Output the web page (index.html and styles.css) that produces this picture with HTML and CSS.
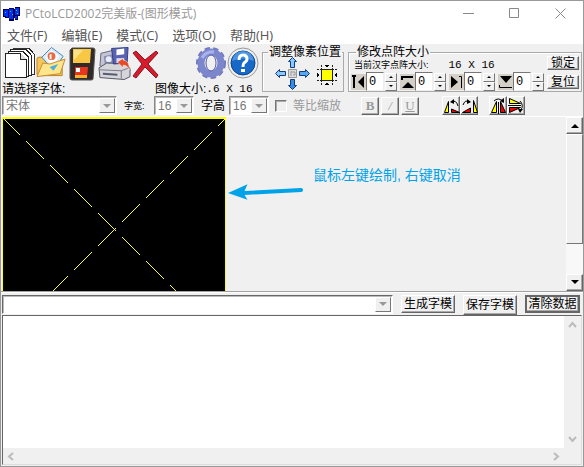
FILE: index.html
```html
<!DOCTYPE html>
<html lang="zh-CN">
<head>
<meta charset="utf-8">
<title>PCtoLCD2002</title>
<link rel="stylesheet" href="styles.css">
</head>
<body>
<div class="window">
  <header class="titlebar">
    <svg class="logo" width="17" height="14" viewBox="0 0 17 14" shape-rendering="crispEdges">
      <path fill="#000050" d="M0 2h6V1h5v1h1V0h5v9h-2v4h-3v-2h-1v3H6v-3H2v-1H0z"/>
      <path fill="#0030f0" d="M1 3h4v6H1zM6 2h4v10H6zM12 1h4v7h-4zM3 9h2v1H3zM12 9h2v3h-2z"/>
      <path fill="#20c8ff" d="M2 5h1v1H2zM7 4h1v1H7zM9 7h1v1H9zM13 3h1v1h-1zM14 6h1v1h-1z"/>
    </svg>
    <h1 class="title">PCtoLCD2002完美版-(图形模式)</h1>
    <button class="caption" aria-label="最小化"><svg width="11" height="11"><path d="M0 5.5h11"/></svg></button>
    <button class="caption" aria-label="最大化"><svg width="11" height="11"><path d="M.5.5h9v9h-9z"/></svg></button>
    <button class="caption" aria-label="关闭"><svg width="11" height="11"><path d="M.5.5l10 10M10.500.5l-10 10"/></svg></button>
  </header>
  <nav class="menubar">
    <a href="#">文件(F)</a><a href="#">编辑(E)</a><a href="#">模式(C)</a><a href="#">选项(O)</a><a href="#">帮助(H)</a>
  </nav>

  <section class="toolbar">
    <div class="left">
      <div class="tools">
        <button class="tool" aria-label="新建"><svg width="31" height="35" viewBox="0 0 31 35" shape-rendering="crispEdges">
          <path fill="#fff" stroke="#333" d="M8.500 2.500h15l6 6v20h-21z"/><path fill="#fff" stroke="#222" d="M5.500 3.500h15l6 6v20h-21z"/><path fill="#fff" stroke="#222" d="M3.500 5.500h14l6 6v19h-20z"/><path fill="#fff" stroke="#222" d="M.5 7.500h15l6 6v18H.5z"/><path fill="#ddd" stroke="#222" d="M15.500 7.500v6h6"/><path stroke="#222" d="M18 5l6 6M21 3l6 7M24 2l5 6"/>
        </svg></button>
        <button class="tool" aria-label="打开"><svg width="32" height="35" viewBox="0 0 33 35">
          <path fill="#f5c65a" stroke="#bd8125" d="M1 29V13q0-2 2-2h6l3 3h15v16H3z"/>
          <path fill="#d9eefa" stroke="#4386b7" d="M16 1l12 9-10 15L6 11z"/><path fill="#fff" d="M16 4l8 6-7 11-7-10z"/><circle cx="16" cy="10" r="4" fill="#e86b42"/><path d="M15 8v5" stroke="#fff" stroke-width="2"/>
          <path fill="#ffe58b" stroke="#c7892c" d="M1 31l6-14 7 1 16-5-5 15z"/><path fill="#4bb1dc" d="M14 21l9-3-5 7z"/>
        </svg></button>
        <button class="tool" aria-label="保存"><svg width="30" height="35" viewBox="1 0 30 35">
          <path fill="#302b28" stroke="#555" d="M5 2h21q2 0 2 2l-2 29q0 1-2 1H5q-2 0-2-2V4z"/><path fill="#f8c743" d="M6 3h18l-1 14H6z"/><path fill="#ffe287" d="M7 4h9L7 14z"/><path fill="#e83520" d="M8 21h13l-1 10H8z"/><path fill="#fff" d="M9 22h4v4H9z"/><path fill="#f6b12f" d="M8 29h12v3H8z"/>
        </svg></button>
        <button class="tool" aria-label="另存为"><svg width="33" height="35" viewBox="0 0 34 35">
          <path fill="#c5c5d3" stroke="#65657e" d="M3 7l16-4 5 17-15 3-7-3z"/><path fill="#8c91b8" d="M6 10l9-2 1 9-9 2z"/><circle cx="11" cy="13" r="3" fill="#e8edff"/>
          <path fill="#d6d6da" stroke="#545463" d="M1 22l8-5 21 1 3 5v8l-6 3-25-2z"/><path stroke="#777787" fill="none" d="M2 24l22 1 8-3M24 25v8"/><path fill="#555b70" d="M5 27l15 1v2L5 29z"/>
          <path fill="#5864b3" stroke="#343d80" d="M14 2l17-1-1 16-14 1z"/><path fill="#fff" d="M19 3l8-1v6l-8 1z"/><path fill="#d9def2" d="M19 12h8v5h-8z"/><path fill="#e64b24" stroke="#fff" stroke-width=".5" d="M20 16l6-4v2q7 1 6 10-2-5-6-5v3z"/>
        </svg></button>
        <button class="tool" aria-label="删除"><svg width="30" height="35" viewBox="0 0 30 35">
          <path fill="#d41c2c" stroke="#8e1422" d="M2 7l3-2 9 9L25 5l2 2-10 11 10 11-2 3-11-11L5 32l-3-2 9-12z"/>
        </svg></button>
        <button class="tool gear" aria-label="设置"><svg width="32" height="35" viewBox="0 0 32 35">
          <ellipse cx="16" cy="17" rx="13" ry="14" fill="none" stroke="#7277bb" stroke-width="4" stroke-dasharray="5 3.170"/><ellipse cx="16" cy="17" rx="10" ry="11" fill="none" stroke="#7c86cd" stroke-width="7"/><ellipse cx="16" cy="17" rx="5" ry="8" fill="#f0f0f0" stroke="#565ca5"/><path fill="none" stroke="#a9b2ec" stroke-width="3" d="M7 12q4-7 12-6"/>
        </svg></button>
        <button class="tool" aria-label="关于"><svg width="32" height="35" viewBox="0 0 32 35">
          <circle cx="16" cy="17" r="15" fill="#eee" stroke="#999"/><circle cx="16" cy="17" r="12" fill="#1768c7" stroke="#0a4595"/><path fill="#4d94df" d="M5 15q2-10 11-10 9 0 11 10-11-5-22 0z"/><path fill="none" stroke="#fff" stroke-width="3" d="M12 14q0-5 4-5t4 4q0 2-3 4-1 1-1 4"/><path fill="#fff" d="M14 23h4v3h-4z"/>
        </svg></button>
      </div>
      <div class="labels"><label class="pick" for="font">请选择字体:</label><span>图像大小:</span><span class="mono">.6 X 16</span></div>
    </div>

    <fieldset class="group move">
      <legend>调整像素位置</legend>
      <div class="pad">
        <button class="up" aria-label="上移"><svg width="11" height="11"><path fill="#8ac9ff" stroke="#123c7c" d="M5.500.5l4 4h-2v6h-4v-6h-2z"/></svg></button>
        <button class="lt" aria-label="左移"><svg width="11" height="11"><path fill="#8ac9ff" stroke="#123c7c" d="M.5 5.500l4-4v2h6v4h-6v2z"/></svg></button>
        <button class="mid" aria-label="居中"><svg width="11" height="11"><path fill="#ddd" stroke="#999" d="M1.500 1.500h8v8h-8zM4 3v5M4 4h4v3H6"/></svg></button>
        <button class="rt" aria-label="右移"><svg width="11" height="11"><path fill="#56a9f0" stroke="#123c7c" d="M10.500 5.500l-4-4v2h-6v4h6v2z"/></svg></button>
        <button class="dn" aria-label="下移"><svg width="11" height="11"><path fill="#358ce8" stroke="#123c7c" d="M5.500 10.500l4-4h-2v-6h-4v6h-2z"/></svg></button>
      </div>
      <button class="square" aria-label="适应"><svg width="20" height="20" shape-rendering="crispEdges"><path stroke="#222" fill="none" d="M4.500 0v20M15.500 0v20M0 4.500h20M0 15.500h20" stroke-dasharray="2 1"/><path fill="#ff0" stroke="#222" d="M4.500 4.500h11v11h-11z"/><path d="M8 0h4l-2 3zM8 20h4l-2-3zM0 8v4l3-2zM20 8v4l-3-2z"/></svg></button>
    </fieldset>

    <fieldset class="group matrix">
      <legend>修改点阵大小</legend>
      <div class="matrix-main">
        <div class="current"><span class="tiny">当前汉字点阵大小:</span><span class="mono">16 X 16</span></div>
        <div class="spins">
          <div class="spin"><svg width="15" height="16"><path fill="none" stroke="#000" stroke-width="2" d="M1 2h4M3 2v12"/><path d="M13 2v12L7 8z"/></svg><input aria-label="左" value="0"><span class="arrows"><button aria-label="左加"><i class="tri-up"></i></button><button aria-label="左减"><i class="tri-down"></i></button></span></div>
          <div class="spin"><svg width="15" height="16"><path fill="none" stroke="#000" stroke-width="2" d="M2 6V3h11"/><path d="M2 14h12L8 8z"/></svg><input aria-label="上" value="0"><span class="arrows"><button aria-label="上加"><i class="tri-up"></i></button><button aria-label="上减"><i class="tri-down"></i></button></span></div>
          <div class="spin"><svg width="15" height="16"><path d="M2 2v12l7-6z"/><path fill="none" stroke="#000" d="M10 2.500h2.500V14"/></svg><input aria-label="右" value="0"><span class="arrows"><button aria-label="右加"><i class="tri-up"></i></button><button aria-label="右减"><i class="tri-down"></i></button></span></div>
          <div class="spin"><svg width="15" height="16"><path d="M2 2h12L8 9z"/><path fill="none" stroke="#000" d="M1.500 11v2.500H14"/></svg><input aria-label="下" value="0"><span class="arrows"><button aria-label="下加"><i class="tri-up"></i></button><button aria-label="下减"><i class="tri-down"></i></button></span></div>
        </div>
      </div>
      <div class="lock"><button class="btn">锁定</button><button class="btn">复位</button></div>
    </fieldset>
  </section>

  <section class="format">
    <span class="combo font"><select id="font" disabled><option>宋体</option></select><span class="drop"><i class="tri-down"></i></span></span>
    <label class="tiny width-label" for="cw">字宽:</label>
    <span class="combo"><select id="cw" disabled><option>16</option></select><span class="drop"><i class="tri-down"></i></span></span>
    <label class="height-label" for="ch">字高</label>
    <span class="combo"><select id="ch" disabled><option>16</option></select><span class="drop"><i class="tri-down"></i></span></span>
    <label class="scale"><input type="checkbox" disabled>等比缩放</label>
    <div class="styles">
      <button class="btn style" disabled><b>B</b></button><button class="btn style" disabled><em>/</em></button><button class="btn style" disabled><u>U</u></button>
    </div>
    <div class="flips">
      <button class="btn flip" aria-label="左转"><svg width="17" height="17"><path fill="#ff0" stroke="#000" d="M1.500 15.500h4v-11z"/><path fill="#e00" stroke="#000" d="M8.500 12v3.500h8z"/><path fill="none" stroke="#000" d="M8 5q5-3 7 4"/><path d="M7 5l4-3v5z"/></svg></button>
      <button class="btn flip" aria-label="右转"><svg width="17" height="17"><path fill="#ff0" stroke="#000" d="M12.500 15.500h4l-4-12z"/><path fill="#e00" stroke="#000" d="M9.500 11v4.500h-8z"/><path fill="none" stroke="#000" d="M2 8q2-6 7-3"/><path d="M10 5L6 2v5z"/></svg></button>
      <button class="btn flip gap" aria-label="水平翻转"><svg width="17" height="17"><path fill="#ff0" stroke="#000" d="M1.500 15.500h5v-11z"/><path fill="#e00" stroke="#000" d="M10.500 4.500v11h5z"/><path fill="none" stroke="#000" d="M8.500 5v12M4 4q4-4 9 0"/><path d="M14 6V1l-4 3z"/></svg></button>
      <button class="btn flip" aria-label="垂直翻转"><svg width="17" height="17"><path fill="#ff0" stroke="#000" d="M1.500 1.500v5h11z"/><path fill="#e00" stroke="#000" d="M1.500 15.500v-5h11z"/><path fill="none" stroke="#000" d="M0 8.500h13M12 4q4 4 1 9"/><path d="M10 12h5l-3 4z"/></svg></button>
    </div>
  </section>

  <main class="canvas">
    <svg class="drawing" width="224" height="100%" shape-rendering="crispEdges">
      <g fill="none" stroke="#ffff40"><path pathLength="240" stroke-dasharray="18 6" d="M.5.5l240 240"/><path pathLength="226" stroke-dasharray="18 6" d="M-.5 225.500l226-226"/></g>
      <path fill="none" stroke="#ff0" d="M.5 400V.5h223V400M0 1.500h224"/>
    </svg>
    <svg class="pointer" width="76" height="20" viewBox="0 0 78 20"><path fill="#00a2e8" d="M0 11L20 2l-3 7 58-3q2 0 2 2t-2 2l-58 3 3 5z"/></svg>
    <p class="note">鼠标左键绘制, 右键取消</p>
    <div class="scroll">
      <button class="btn" aria-label="向上滚动"><i class="tri-up"></i></button><div class="thumb"></div><div class="track"></div><button class="btn" aria-label="向下滚动"><i class="tri-down"></i></button>
    </div>
  </main>

  <section class="commands">
    <span class="combo history"><select aria-label="历史"><option></option></select><span class="drop"><i class="tri-down"></i></span></span>
    <button class="btn">生成字模</button><button class="btn save">保存字模</button><button class="btn clear">清除数据</button>
  </section>

  <section class="output">
    <textarea aria-label="输出"></textarea>
    <div class="vbar"><svg width="9" height="8"><path d="M1 6l3.500-4L8 6"/></svg><svg width="9" height="8"><path d="M1 2l3.500 4L8 2"/></svg></div>
    <div class="hbar"><svg width="8" height="9"><path d="M6 1L2 4.500 6 8"/></svg><svg width="8" height="9"><path d="M2 1l4 3.500L2 8"/></svg></div>
  </section>
</div>
</body>
</html>
```
FILE: styles.css
```css
* { box-sizing: border-box; }
body { margin: 0; font: 12px/14px "Liberation Sans", "Noto Sans CJK SC", sans-serif; color: #000; }
button, input, select, textarea { font: inherit; margin: 0; padding: 0; border: 0; border-radius: 0; }
button { background: none; color: inherit; }
svg { display: block; }
p, h1 { margin: 0; }

.window { display: flex; flex-direction: column; height: 100vh; border: 1px solid #999; background: #f0f0f0; }
.titlebar { display: flex; align-items: center; height: 25px; padding-left: 2px; background: #fff; }
.title { flex: 1; margin-left: 5px; font: 12px/20px "Open Sans", "Noto Sans CJK SC", sans-serif; color: #999; white-space: nowrap; }
.caption { display: grid; place-items: center; width: 46px; height: 24px; }
.caption path { fill: none; stroke: #888; }
.menubar { display: flex; gap: 14px; height: 18px; padding-left: 6px; background: #fff; font: 13px/18px "Open Sans", "Noto Sans CJK SC", sans-serif; }
.menubar a { color: #555; text-decoration: none; }

.toolbar { display: flex; height: 51px; padding-right: 1px; border-left: 1px solid #fff; }
.left { width: 260px; }
.tools { display: flex; height: 37px; padding: 1px 0 0 3px; }
.tool { flex: none; height: 36px; }
.gear { margin-left: 34px; }
.labels { display: flex; height: 14px; line-height: 16px; }
.pick { width: 153px; }
.mono { font-family: "Liberation Mono", monospace; font-size: 11px; }
.tiny { font-size: 9px; }

.group { position: relative; min-width: 0; height: 46px; margin: 2px 0 0; padding: 0; border: 1px solid #aaa; box-shadow: inset 1px 1px #fff; }
.group legend { padding: 0 1px; margin-left: 5px; line-height: 13px; white-space: nowrap; }
.move { display: flex; width: 82px; gap: 6px; }
.pad { display: grid; grid-template: repeat(3, 11px) / repeat(3, 12px); margin: -2px 0 0 12px; }
.up { grid-area: 1 / 2; } .lt { grid-area: 2 / 1; } .mid { grid-area: 2 / 2; } .rt { grid-area: 2 / 3; } .dn { grid-area: 3 / 2; }
.square { align-self: center; }
.matrix { display: flex; flex: 1; margin-left: 4px; padding-left: 2px; }
.matrix-main { flex: 1; }
.current { display: flex; gap: 20px; height: 13px; padding-left: 3px; line-height: 12px; white-space: nowrap; }
.spins { display: flex; gap: 2px; }
.spin { display: flex; align-items: center; width: 47px; height: 19px; }
.spin svg { flex: none; background: #d4d0c8; }
.spin input { width: 18px; height: 19px; padding-left: 2px; border: 1px solid; border-color: #777 #eee #eee #777; background: #fff; font-family: "Liberation Mono", monospace; }
.arrows { display: flex; flex-direction: column; margin-left: 1px; }
.arrows button { display: grid; place-items: center; width: 12px; height: 9px; border: 1px solid; border-color: #fff #777 #777 #fff; }
.arrows i { border-width: 2px; }
.lock { display: flex; flex-direction: column; gap: 5px; width: 34px; margin-top: -3px; }

.btn { display: grid; place-items: center; height: 14px; line-height: 12px; border: 1px solid; border-color: #fff #666 #666 #fff; box-shadow: inset -1px -1px #aaa; background: #f0f0f0; }
.lock .btn { width: 32px; }
.tri-up, .tri-down { width: 0; height: 0; border: 4px solid transparent; }
.tri-up { border-top-width: 0; border-bottom-color: #000; }
.tri-down { border-bottom-width: 0; border-top-color: #000; }
.arrows .tri-up { border-top-width: 0; }
.arrows .tri-down { border-bottom-width: 0; }

.format { display: flex; align-items: center; height: 22px; padding: 0 1px; border-bottom: 1px solid #fff; }
.combo { display: grid; grid-template-columns: 1fr 18px; width: 40px; height: 19px; border: 1px solid; border-color: #888 #fff #fff #888; box-shadow: inset 1px 1px #bbb; background: #fff; }
.combo select { grid-area: 1 / 1 / 2 / 3; appearance: none; padding-left: 3px; background: none; color: #777; opacity: 1; }
.drop { grid-area: 1 / 2; display: grid; place-items: center; margin: 1px; border: 1px solid; border-color: #fff #777 #777 #fff; background: #f0f0f0; pointer-events: none; }
.drop i { border-top-color: #999; }
.font { width: 115px; }
.width-label { margin-left: 7px; width: 30px; line-height: 12px; }
.height-label { width: 35px; padding-left: 7px; }
.scale { display: flex; align-items: center; gap: 6px; width: 86px; margin-left: 6px; color: #999; }
.scale input { appearance: none; width: 12px; height: 12px; border: 1px solid; border-color: #777 #fff #fff #777; box-shadow: inset 1px 1px #aaa; }
.styles { display: flex; gap: 2px; }
.style { width: 18px; height: 18px; color: #999; font: 13px/14px "Liberation Serif", serif; }
.flips { display: flex; margin-left: 23px; }
.flip { width: 18px; height: 19px; }
.gap { margin-left: 11px; }

.canvas { display: flex; flex: 176 1 0; min-height: 0; padding-left: 1px; border-bottom: 1px solid #a0a0a0; overflow: hidden; }
.drawing { flex: none; background: #000; }
.pointer { flex: none; margin: 65px 0 0 2px; }
.note { flex: 1; margin: 49px 0 0 9px; color: #00a2e8; font-size: 14px; line-height: 18px; white-space: nowrap; }
.scroll { display: flex; flex-direction: column; width: 17px; background: #f8f8f8; }
.scroll .btn { flex: none; height: 17px; }
.thumb { flex: 110; border: 1px solid; border-color: #fff #777 #777 #fff; background: #f0f0f0; }
.track { flex: 31; }

.commands { display: flex; align-items: flex-start; gap: 8px; height: 23px; padding: 2px 3px 0 1px; border-top: 1px solid #fff; }
.commands .btn { width: 54px; height: 18px; }
.history { flex: 1; border-color: #666 #fff #fff #666; }
.commands .save { height: 20px; }
.commands .clear { border: 2px solid #666; width: 55px; }

.output { display: grid; grid-template: 1fr 16px / 1fr 17px; flex: 150 1 0; min-height: 0; margin: 0 1px 1px; border: 1px solid; border-color: #666 #ddd #ddd #666; }
.output textarea { width: 100%; height: 100%; resize: none; background: #fff; outline: 0; overflow: hidden; }
.output path { fill: none; stroke: #bbb; stroke-width: 2; }
.vbar { display: flex; flex-direction: column; align-items: center; justify-content: space-between; padding: 5px 0; }
.hbar { display: flex; align-items: center; justify-content: space-between; padding: 0 4px; }
```
